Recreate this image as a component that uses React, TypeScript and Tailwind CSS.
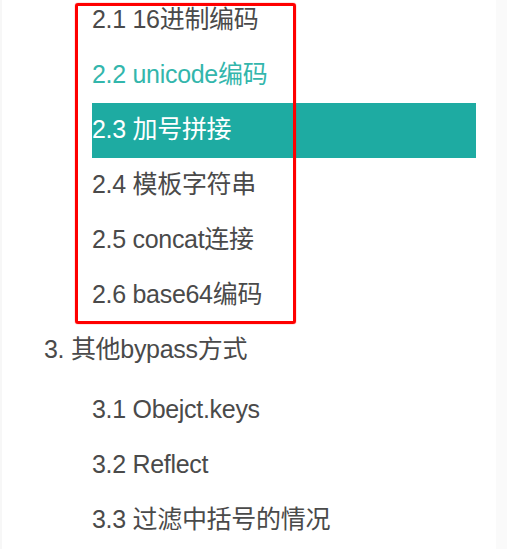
import React from 'react';

const subItems = [
  {label: '2.1 16进制编码', state: 'normal'},
  {label: '2.2 unicode编码', state: 'hover'},
  {label: '2.3 加号拼接', state: 'active'},
  {label: '2.4 模板字符串', state: 'normal'},
  {label: '2.5 concat连接', state: 'normal'},
  {label: '2.6 base64编码', state: 'normal'},
];

const bypassItems = ['3.1 Obejct.keys', '3.2 Reflect', '3.3 过滤中括号的情况'];

const font = {fontFamily: '"Liberation Sans", "Noto Sans CJK SC", sans-serif'};

export default function App() {
  return (
    <div className="relative flex h-[549px] w-[507px] overflow-hidden bg-white" style={font}>
      <div className="w-[2px] bg-[#f7f7f7]" />
      <div className="flex-1 pr-[20px]">
        <ul className="mt-[-7px] pl-[90px]">
          {subItems.map(item => (
            <li
              key={item.label}
              className={
                'flex h-[55px] items-center pb-[1px] text-[25px] tracking-[-0.3px] ' +
                (item.state === 'active'
                  ? 'bg-[#1eaba2] text-white'
                  : item.state === 'hover'
                    ? 'text-[#33b6ac]'
                    : 'text-[#4a4a4a]')
              }
            >
              {item.label}
            </li>
          ))}
        </ul>
        <div className="flex h-[53px] items-center pl-[42px] text-[25px] tracking-[-0.3px] text-[#4a4a4a]">
          3. 其他bypass方式
        </div>
        <ul className="mt-[6px] pl-[90px]">
          {bypassItems.map(label => (
            <li key={label} className="flex h-[55px] items-center text-[25px] tracking-[-0.3px] text-[#4a4a4a]">
              {label}
            </li>
          ))}
        </ul>
      </div>
      <div className="w-[11px] bg-[#fafafa]" />

      {/* annotation box drawn over the menu */}
      <div className="pointer-events-none absolute left-[75px] top-[3px] h-[321px] w-[221px] rounded-[3px] border-[3px] border-[#ff0000] shadow-[0_0_1px_#ff0000]" />
    </div>
  );
}
